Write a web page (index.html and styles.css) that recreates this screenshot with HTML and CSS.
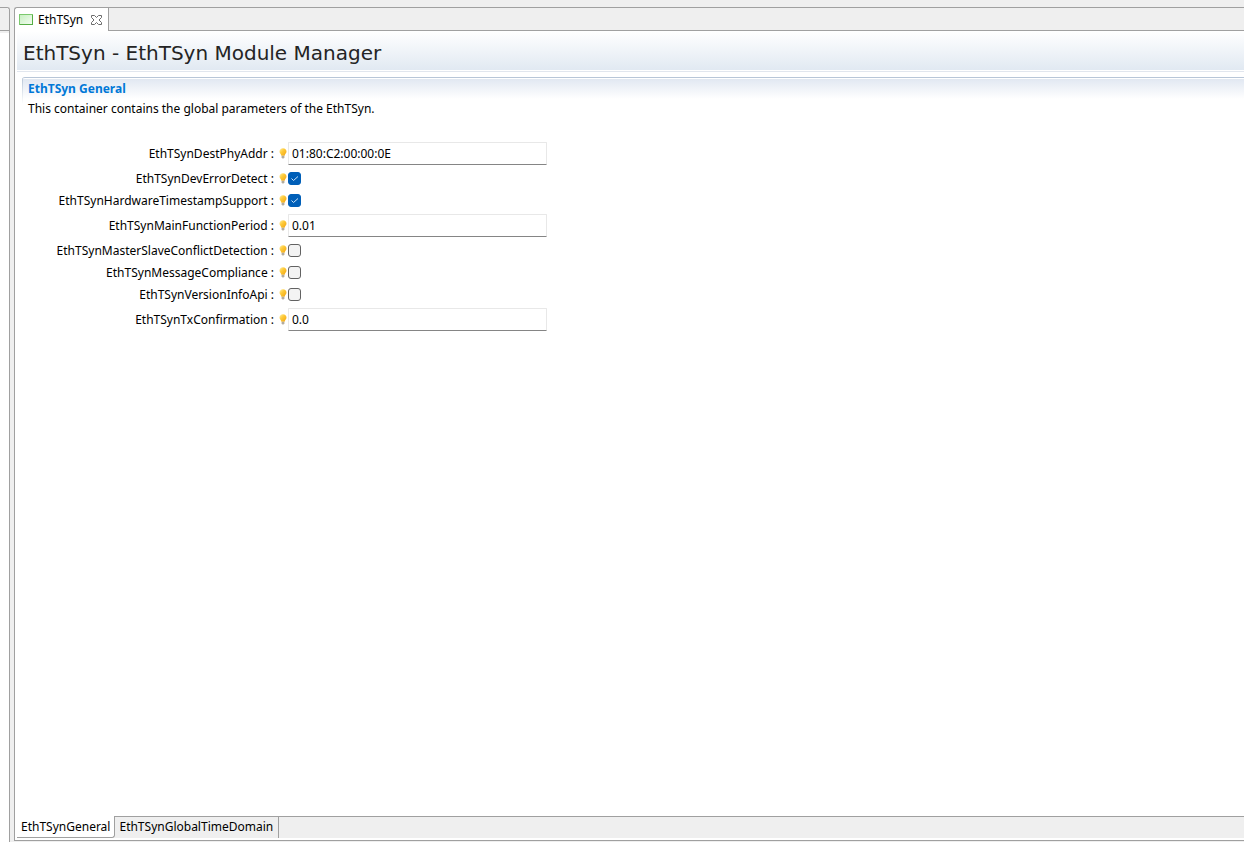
FILE: index.html
```html
<!DOCTYPE html>
<html lang="en">
<head>
<meta charset="utf-8">
<title>EthTSyn - EthTSyn Module Manager</title>
<link rel="stylesheet" href="styles.css">
</head>
<body>
<svg class="defs" width="0" height="0" aria-hidden="true">
  <defs>
    <linearGradient id="bulb-fill" x1="0" y1="0" x2="1" y2="1">
      <stop offset="0" stop-color="#fff0a8"/>
      <stop offset="0.4" stop-color="#fecb3a"/>
      <stop offset="1" stop-color="#f2a20c"/>
    </linearGradient>
    <symbol id="bulb" viewBox="0 0 8 11">
      <path d="M4 .3C1.900.3.500 1.700.500 3.600c0 1.700 1.500 2.500 1.900 4.200h3.200c.4-1.700 1.900-2.500 1.900-4.200C7.500 1.700 6.100.3 4 .3z" fill="url(#bulb-fill)"/>
      <path d="M2.600 7.800h2.800v1.500L4.600 10.500H3.400L2.600 9.300z" fill="#b3ab9c"/>
    </symbol>
  </defs>
</svg>
<div class="workbench">
  <aside class="side"><div class="side-head"></div></aside>
  <main class="editor">
    <header class="tabbar">
      <div class="tab">
        <svg class="tab-icon" width="14" height="11" viewBox="0 0 14 11" aria-hidden="true">
          <defs><linearGradient id="leaf" x1="0" y1="0" x2="1" y2="1"><stop offset="0" stop-color="#c6efc0"/><stop offset="1" stop-color="#f4fdf2"/></linearGradient></defs>
          <rect x=".5" y=".5" width="13" height="10" fill="url(#leaf)" stroke="#55ad45"/>
          <path d="M0 .5h14M.5 0v11" stroke="#7cc96e"/>
        </svg>
        <span>EthTSyn</span>
        <button class="close" aria-label="Close">
          <svg width="11" height="10" viewBox="0 0 11 10" aria-hidden="true"><path d="M.5.500h3l2 2 2-2h3v2L8 5l2.500 2.500v2h-3l-2-2-2 2h-3v-2L3 5 .5 2.500z" fill="#fff" stroke="#6b6b6b"/></svg>
        </button>
      </div>
      <div class="tab-rest"></div>
    </header>
    <div class="form">
      <h1>EthTSyn - EthTSyn Module Manager</h1>
      <section class="section">
        <h2>EthTSyn General</h2>
        <p>This container contains the global parameters of the EthTSyn.</p>
        <div class="fields">
          <div class="row text"><label for="f1">EthTSynDestPhyAddr :</label><svg class="bulb"><use href="#bulb"/></svg><input id="f1" type="text" value="01:80:C2:00:00:0E"></div>
          <div class="row"><label for="f2">EthTSynDevErrorDetect :</label><svg class="bulb"><use href="#bulb"/></svg><span class="check"><input id="f2" type="checkbox" checked><svg viewBox="0 0 13 13"><path d="M3.500 6.500l2 2L10 4.500"/></svg></span></div>
          <div class="row"><label for="f3">EthTSynHardwareTimestampSupport :</label><svg class="bulb"><use href="#bulb"/></svg><span class="check"><input id="f3" type="checkbox" checked><svg viewBox="0 0 13 13"><path d="M3.500 6.500l2 2L10 4.500"/></svg></span></div>
          <div class="row text"><label for="f4">EthTSynMainFunctionPeriod :</label><svg class="bulb"><use href="#bulb"/></svg><input id="f4" type="text" value="0.01"></div>
          <div class="row"><label for="f5">EthTSynMasterSlaveConflictDetection :</label><svg class="bulb"><use href="#bulb"/></svg><span class="check"><input id="f5" type="checkbox"></span></div>
          <div class="row"><label for="f6">EthTSynMessageCompliance :</label><svg class="bulb"><use href="#bulb"/></svg><span class="check"><input id="f6" type="checkbox"></span></div>
          <div class="row"><label for="f7">EthTSynVersionInfoApi :</label><svg class="bulb"><use href="#bulb"/></svg><span class="check"><input id="f7" type="checkbox"></span></div>
          <div class="row text"><label for="f8">EthTSynTxConfirmation :</label><svg class="bulb"><use href="#bulb"/></svg><input id="f8" type="text" value="0.0"></div>
        </div>
      </section>
    </div>
    <nav class="pages">
      <button class="page active">EthTSynGeneral</button>
      <button class="page">EthTSynGlobalTimeDomain</button>
      <div class="pages-rest"></div>
    </nav>
  </main>
</div>
</body>
</html>
```
FILE: styles.css
```css
* { box-sizing: border-box; }
body {
  margin: 0;
  background: #efefef;
  color: #000;
  font: 12px/16px "Noto Sans", "Open Sans", sans-serif;
}
button, input { font: inherit; color: inherit; margin: 0; }
.defs { position: absolute; }
.workbench { display: flex; gap: 4px; height: 100vh; padding-top: 7px; }
.side {
  width: 10px;
  background: #fff;
  border-top: 1px solid #a0a0a0;
  border-right: 1px solid #a0a0a0;
  border-top-right-radius: 3px;
}
.side-head { height: 25px; background: #efefef; border-bottom: 2px solid #efefef; box-shadow: inset 0 -1px #a0a0a0; border-top-right-radius: 3px; }
.editor {
  flex: 1;
  min-width: 0;
  display: flex;
  flex-direction: column;
  margin-bottom: 1px;
  background: #fff;
  border: 1px solid #a0a0a0;
  border-right: 0;
  border-top-left-radius: 3px;
}
.tabbar { display: flex; height: 23px; }
.tab { display: flex; align-items: center; padding: 0 6px 0 4px; border-right: 1px solid #a0a0a0; }
.tab span { margin: 0 8px 0 5px; }
.close { display: flex; padding: 0; border: 0; background: none; }
.tab-rest { flex: 1; background: #efefef; border-bottom: 1px solid #a0a0a0; }
.form { flex: 1; min-height: 0; padding-left: 2px; overflow: hidden; }
h1 {
  margin: 0;
  height: 41px;
  padding-left: 6px;
  font: 20px/44px "DejaVu Sans", sans-serif;
  color: #242424;
  background: linear-gradient(#fff, #e1e9f2) no-repeat 0 0 / 100% 39px;
  border-bottom: 1px solid #e1e6ee;
}
.section {
  margin: 5px 0 0 5px;
  border-top: 1px solid #b8c6d8;
  border-top-left-radius: 3px;
  padding: 1px 0 0 1px;
  background: linear-gradient(#b8c6d8, #fff) no-repeat 0 0 / 1px 26px;
}
h2 {
  margin: 0;
  height: 20px;
  padding-left: 5px;
  font-size: 12px;
  line-height: 20px;
  color: #0078d7;
  background: linear-gradient(#e1e8f2, #fff);
}
p { margin: 2px 0 0 5px; }
.fields { display: flex; flex-direction: column; gap: 5px; width: 524px; margin-top: 25px; }
.row { display: flex; align-items: center; height: 17px; }
.row.text { height: 23px; }
.row label { width: 251px; text-align: right; white-space: nowrap; }
.bulb { width: 8px; height: 11px; margin: 0 1px 0 5px; flex: none; }
.row input[type="text"] {
  flex: 1;
  min-width: 0;
  height: 23px;
  padding: 0 3px;
  background: #fff;
  border: 1px solid #e8e8e8;
  border-bottom-color: #858585;
  border-radius: 1px;
}
.check { position: relative; display: flex; width: 13px; height: 13px; }
.check input {
  appearance: none;
  width: 13px;
  height: 13px;
  border: 1px solid #626262;
  border-radius: 3px;
  background: #f3f3f3;
}
.check input:checked { background: #005fb8; border-color: #005fb8; }
.check svg { position: absolute; inset: 0; fill: none; stroke: #cfe4f7; pointer-events: none; }
.pages { display: flex; height: 24px; padding-left: 2px; background: linear-gradient(#fff, #fff) no-repeat 0 0 / 4px 100%; }
.page {
  height: 22px;
  padding: 0 5px 2px 4px;
  border: 1px solid #a0a0a0;
  border-width: 1px 1px 0 0;
  background: #efefef;
  white-space: nowrap;
}
.page.active { padding: 0 4px; background: #fff; border-width: 0 1px 1px 0; border-bottom-right-radius: 3px; }
.pages-rest { flex: 1; height: 22px; background: #efefef; border-top: 1px solid #a0a0a0; }
```
